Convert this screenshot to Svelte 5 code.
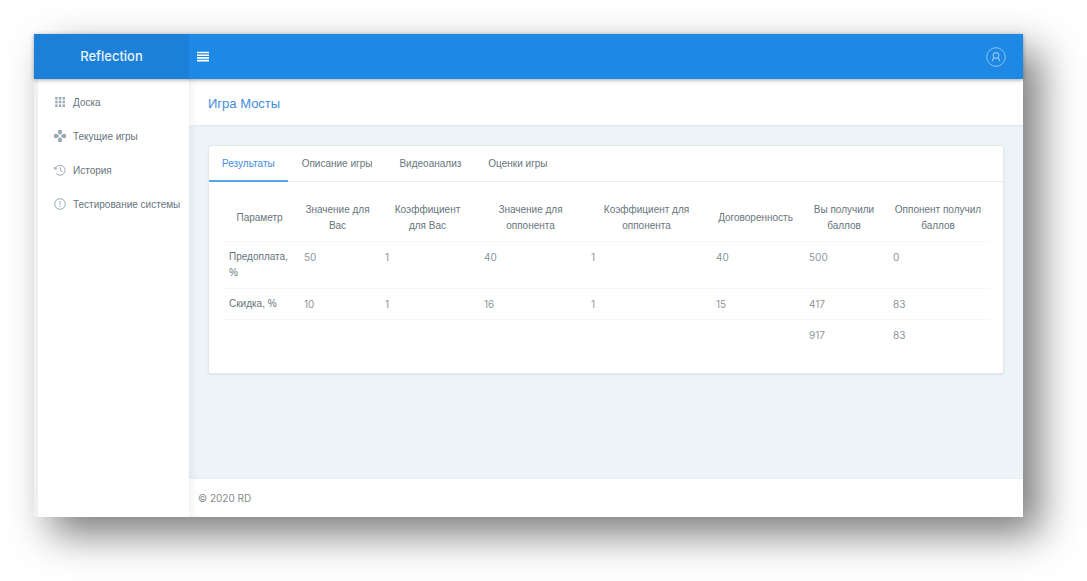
<script>
    let activeTab = 0;

    const menu = [
        { icon: 'grid', label: 'Доска' },
        { icon: 'gamepad', label: 'Текущие игры' },
        { icon: 'history', label: 'История' },
        { icon: 'alert', label: 'Тестирование системы' },
    ];

    const tabs = ['Результаты', 'Описание игры', 'Видеоанализ', 'Оценки игры'];

    // share is the relative width of a column
    const columns = [
        { title: 'Параметр', share: 75 },
        { title: 'Значение для Вас', share: 81 },
        { title: 'Коэффициент для Вас', share: 99 },
        { title: 'Значение для оппонента', share: 107 },
        { title: 'Коэффициент для оппонента', share: 125 },
        { title: 'Договоренность', share: 93 },
        { title: 'Вы получили баллов', share: 84 },
        { title: 'Оппонент получил баллов', share: 104 },
    ];
    const total = columns.reduce((sum, c) => sum + c.share, 0);

    const rows = [
        ['Предоплата, %', '50', '1', '40', '1', '40', '500', '0'],
        ['Скидка, %', '10', '1', '16', '1', '15', '417', '83'],
        ['', '', '', '', '', '', '917', '83'],
    ];
</script>

<div class="window">
    <header>
        <a class="brand" href="#home">Reflection</a>
        <button class="toggle" aria-label="Меню">
            <svg width="12" height="12" viewBox="0 0 12 12">
                <path d="M0 1.5h12M0 4.2h12M0 6.9h12M0 9.6h12" stroke="#fff" stroke-width="1.6" />
            </svg>
        </button>
        <button class="user" aria-label="Профиль">
            <svg width="20" height="20" viewBox="0 0 20 20" fill="none" stroke="#8dc4f5">
                <circle cx="10" cy="10" r="9.3" />
                <circle cx="10" cy="8.5" r="2.8" stroke-width="1.2" />
                <path d="M6.3 14.3c0-2 1-3 2.4-3.3M13.7 14.3c0-2-1-3-2.4-3.3" stroke-width="1.2" />
            </svg>
        </button>
    </header>

    <div class="body">
        <nav>
            {#each menu as item}
                <a href="#{item.icon}">
                    <svg width="12" height="12" viewBox="0 0 12 12">
                        {#if item.icon === 'grid'}
                            {#each [1, 4.7, 8.4] as y}
                                {#each [1.2, 4.9, 8.6] as x}
                                    <rect {x} {y} width="2.4" height="2.6" />
                                {/each}
                            {/each}
                        {:else if item.icon === 'gamepad'}
                            <path d="M4.1 0h3.8v3.3L6 5.1 4.1 3.3zM4.1 12h3.8V8.7L6 6.9 4.1 8.7zM0 4.1v3.8h3.3L5.1 6 3.3 4.1zM12 4.1v3.8H8.7L6.9 6l1.8-1.9z" />
                        {:else if item.icon === 'history'}
                            <path class="line" d="M1.5 4.3A5 5 0 1 1 2.2 9.4M6.4 3.2v3.1l2.3 1.5" />
                            <path d="M0 2.5l.5 3.3 3.2-.9z" />
                        {:else}
                            <circle class="line" cx="6" cy="6" r="5.3" />
                            <path class="line" d="M6 3v3.8M6 7.9v1.2" />
                        {/if}
                    </svg>
                    <span>{item.label}</span>
                </a>
            {/each}
        </nav>

        <div class="page">
            <div class="title">
                <h1>Игра Мосты</h1>
            </div>

            <main>
                <section class="card">
                    <div class="tabs" role="tablist">
                        {#each tabs as tab, i}
                            <button
                                role="tab"
                                aria-selected={activeTab === i}
                                class:active={activeTab === i}
                                on:click={() => (activeTab = i)}
                            >{tab}</button>
                        {/each}
                    </div>
                    <div class="content">
                        <table>
                            <colgroup>
                                {#each columns as column}
                                    <col style="width: {(column.share / total) * 100}%" />
                                {/each}
                            </colgroup>
                            <thead>
                                <tr>
                                    {#each columns as column}
                                        <th scope="col">{column.title}</th>
                                    {/each}
                                </tr>
                            </thead>
                            <tbody>
                                {#each rows as row}
                                    <tr>
                                        {#each row as cell, i}
                                            <td class:number={i > 0}>{cell}</td>
                                        {/each}
                                    </tr>
                                {/each}
                            </tbody>
                        </table>
                    </div>
                </section>
            </main>

            <footer>© 2020 RD</footer>
        </div>
    </div>
</div>

<style>
    :global(body) {
        margin: 0;
        background: #fff;
    }

    .window {
        display: flex;
        flex-direction: column;
        box-sizing: border-box;
        min-height: calc(100vh - 98px);
        margin: 34px 64px 64px 34px;
        background: #fff;
        box-shadow: 17px 17px 38px rgba(0, 0, 0, 0.52);
        font-family: "Liberation Sans", Arial, sans-serif;
        font-size: 10px;
        color: #67757c;
    }

    a {
        color: inherit;
        text-decoration: none;
    }

    button {
        padding: 0;
        border: 0;
        background: none;
        font: inherit;
        color: inherit;
        cursor: pointer;
    }

    svg {
        display: block;
    }

    header {
        position: relative;
        display: flex;
        align-items: center;
        height: 45px;
        background: #1e88e5;
        box-shadow: 0 1px 4px rgba(0, 0, 0, 0.35);
    }

    .brand {
        width: 155px;
        line-height: 45px;
        background: #1c80d8;
        color: #e8f3fc;
        font-family: Inter, sans-serif;
        font-size: 13px;
        font-weight: 500;
        text-align: center;
    }

    .toggle {
        margin-left: 8px;
    }

    .user {
        margin-left: auto;
        margin-right: 17px;
    }

    .body {
        display: flex;
        flex: 1;
    }

    nav {
        flex: none;
        box-sizing: border-box;
        width: 155px;
        padding-top: 6px;
        border-left: 4px solid #f0f0f0;
    }

    nav a {
        display: flex;
        align-items: center;
        gap: 7px;
        height: 34px;
        padding-left: 16px;
        white-space: nowrap;
    }

    nav svg {
        flex: none;
        fill: #99abb4;
    }

    nav .line {
        fill: none;
        stroke: #99abb4;
    }

    .page {
        display: flex;
        flex: 1;
        flex-direction: column;
        min-width: 0;
        box-shadow: inset 6px 0 8px -4px rgba(0, 0, 0, 0.07);
    }

    .title {
        padding: 3px 19px 0;
        border-bottom: 1px solid #e4eaec;
    }

    h1 {
        margin: 0;
        color: #3f8de0;
        font-size: 13px;
        font-weight: 400;
        line-height: 43px;
    }

    main {
        flex: 1;
        padding: 19px;
        background: #edf4f8;
        box-shadow: inset 6px 0 8px -4px rgba(0, 0, 0, 0.07);
    }

    .card {
        border: 1px solid #e4e9ec;
        border-radius: 3px;
        background: #fff;
        box-shadow: 0 1px 2px rgba(0, 0, 0, 0.08);
    }

    .tabs {
        display: flex;
        gap: 1px;
        border-bottom: 1px solid #e9ecef;
    }

    .tabs button {
        height: 36px;
        margin-bottom: -1px;
        padding: 0 13px;
        border-bottom: 2px solid transparent;
    }

    .tabs .active {
        border-color: #55a5ec;
        color: #3f8de0;
    }

    .content {
        padding: 13px 13px 23px;
    }

    table {
        width: 100%;
        table-layout: fixed;
        border-collapse: collapse;
        line-height: 16px;
    }

    th,
    td {
        padding: 7px;
        vertical-align: top;
    }

    th {
        font-weight: 400;
        text-align: center;
        vertical-align: middle;
    }

    td {
        border-top: 1px solid #f5f6f7;
    }

    .number {
        color: #8b969c;
        font-family: Inter, sans-serif;
    }

    footer {
        padding: 0 9px;
        color: #7f8b91;
        font-family: Inter, sans-serif;
        line-height: 38px;
    }
</style>
